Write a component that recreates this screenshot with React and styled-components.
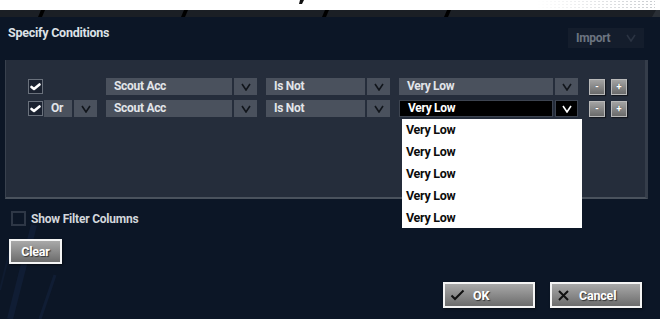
import React from "react";
import styled, { createGlobalStyle } from "styled-components";

const Global = createGlobalStyle`
  html, body { margin: 0; padding: 0; background: #0c1626; }
  body { width: 660px; height: 319px; overflow: hidden; font-family: Roboto, "Liberation Sans", sans-serif; }
  * { box-sizing: border-box; }
`;

const Page = styled.div`
  position: relative;
  width: 660px;
  height: 319px;
  background: #0c1626;
  display: flex;
  flex-direction: column;
  overflow: hidden;
`;

const BgDecor = styled.svg`
  position: absolute;
  left: 0;
  top: 0;
  pointer-events: none;
`;

const TopBand = styled.div`
  position: relative;
  height: 10px;
  background: #ffffff;
  display: flex;
  justify-content: flex-end;
  z-index: 1;
`;

const Dots = styled.div`
  width: 118px;
  height: 9px;
  margin-right: 5px;
  background-image: radial-gradient(circle, #c9ccd0 0.8px, transparent 1.1px);
  background-size: 4px 3px;
  -webkit-mask-image: linear-gradient(90deg, transparent, #000);
  mask-image: linear-gradient(90deg, transparent, #000);
`;

const TitleMark = styled.svg`
  position: absolute;
  left: 298px;
  top: 0;
`;

const Stripe = styled.svg`
  display: block;
  position: relative;
  z-index: 1;
`;

const Body = styled.div`
  position: relative;
  z-index: 1;
  flex: 1;
  display: flex;
  flex-direction: column;
`;

const HeaderRow = styled.div`
  display: flex;
  justify-content: space-between;
  align-items: flex-start;
  padding: 8px 16px 0 8px;
  height: 43px;
`;

const Title = styled.div`
  font-weight: 700;
  font-size: 12.5px;
  letter-spacing: -0.25px;
  color: #dde1e6;
  line-height: 16px;
`;

const ImportButton = styled.div`
  margin-top: 3px;
  width: 76px;
  height: 20px;
  background: #141d2c;
  display: flex;
  align-items: center;
  justify-content: space-between;
  padding: 0 8px 0 8px;
  font-weight: 700;
  font-size: 12px;
  letter-spacing: -0.3px;
  color: #6c7480;
`;

const Panel = styled.div`
  position: relative;
  z-index: 2;
  margin-left: 5px;
  width: 643px;
  height: 139px;
  background: #252d3b;
  border-left: 1px solid #39414e;
  border-right: 3px solid #353d4a;
  border-bottom: 2px solid #4a525d;
  padding: 18px 0 0 22px;
  display: flex;
  flex-direction: column;
  gap: 5px;
`;

const Row = styled.div`
  display: flex;
  align-items: center;
  height: 17px;
  gap: 9px;
`;

const Group = styled.div`
  position: relative;
  display: flex;
  align-items: center;
  gap: ${(p) => p.$gap ?? 2}px;
  width: ${(p) => p.$w}px;
  height: 17px;
  margin-left: ${(p) => p.$ml ?? 0}px;
`;

const Check = styled.div`
  width: 15px;
  height: 15px;
  flex: none;
  background: #1b2230;
  border: 1px solid #6a717c;
  display: flex;
  align-items: center;
  justify-content: center;
  margin-right: ${(p) => p.$mr ?? 0}px;
`;

const Field = styled.div`
  width: ${(p) => p.$w}px;
  height: 17px;
  flex: none;
  background: ${(p) => (p.$active ? "#000" : "#4a515d")};
  border: ${(p) => (p.$active ? "1px solid #3d4450" : "none")};
  color: ${(p) => (p.$active ? "#fff" : "#e2e5e9")};
  font-weight: 700;
  font-size: 12px;
  letter-spacing: -0.3px;
  line-height: 15px;
  padding-left: ${(p) => p.$pl ?? 8}px;
  display: flex;
  align-items: center;
`;

const ChevBox = styled.div`
  width: 23px;
  height: 17px;
  flex: none;
  background: ${(p) => (p.$active ? "#000" : "#4a515d")};
  border: ${(p) => (p.$active ? "1px solid #3d4450" : "none")};
  display: flex;
  align-items: center;
  justify-content: center;
`;

const SmallBtn = styled.div`
  width: 16px;
  height: 16px;
  flex: none;
  background: linear-gradient(#a3a3a3, #6a6a6a);
  border: 1px solid #b9b9b9;
  box-shadow: 1px 1px 1px rgba(0,0,0,0.45);
  color: #fff;
  font-size: 10px;
  font-weight: 700;
  line-height: 12px;
  display: flex;
  align-items: center;
  justify-content: center;
  text-shadow: 0 0 1px #333;
`;

const DropList = styled.div`
  position: absolute;
  left: 3px;
  top: 19px;
  width: 180px;
  height: 109px;
  background: #ffffff;
  display: flex;
  flex-direction: column;
  z-index: 5;
`;

const DropItem = styled.div`
  height: 22px;
  display: flex;
  align-items: center;
  padding-left: 4px;
  font-weight: 700;
  font-size: 12.5px;
  letter-spacing: -0.3px;
  color: #0c0c0c;
`;

const OptionRow = styled.div`
  display: flex;
  align-items: center;
  gap: 5px;
  margin: 12px 0 0 11px;
  font-weight: 700;
  font-size: 12px;
  letter-spacing: -0.2px;
  color: #d3d7dc;
`;

const EmptyBox = styled.div`
  width: 15px;
  height: 15px;
  border: 2px solid #2e3746;
`;

const GrayButton = styled.div`
  width: ${(p) => p.$w}px;
  height: ${(p) => p.$h}px;
  border: 2px solid #f4f4f4;
  background: linear-gradient(#a9a9a9, #6c6c6c);
  box-shadow: 1px 1px 2px rgba(0,0,0,0.5);
  display: flex;
  align-items: center;
  justify-content: ${(p) => p.$justify ?? "center"};
  gap: ${(p) => p.$gap ?? 0}px;
  padding-left: ${(p) => p.$pl ?? 0}px;
  font-weight: 700;
  font-size: 12.5px;
  letter-spacing: -0.2px;
  color: #ffffff;
  text-shadow: 1px 1px 1px #333;
`;

const ClearWrap = styled.div`
  margin: 13px 0 0 9px;
`;

const Footer = styled.div`
  display: flex;
  justify-content: flex-end;
  gap: 15px;
  margin: 18px 18px 0 0;
`;

const Chevron = ({ color = "#11151b" }) => (
  <svg width="10" height="8" viewBox="0 0 10 8">
    <polyline points="1,1 5,7 9,1" fill="none" stroke={color} strokeWidth="1.6" />
  </svg>
);

const Tick = () => (
  <svg width="11" height="9" viewBox="0 0 11 9">
    <path d="M1.5 5 L4 7 L9.5 2.5" fill="none" stroke="#fff" strokeWidth="2.6" strokeLinecap="round" strokeLinejoin="round" />
  </svg>
);

export default function App() {
  return (
    <>
      <Global />
      <Page>
        <BgDecor width="660" height="319" viewBox="0 0 660 319">
          <line x1="34" y1="225" x2="10" y2="319" stroke="#13203a" strokeWidth="6" opacity="0.7" />
          <line x1="55" y1="275" x2="40" y2="319" stroke="#13203a" strokeWidth="3" opacity="0.7" />
          <line x1="10" y1="250" x2="0" y2="290" stroke="#13203a" strokeWidth="2" opacity="0.5" />
        </BgDecor>
        <TopBand>
          <Dots />
          <TitleMark width="8" height="4" viewBox="0 0 8 4">
            <path d="M2 0 L6 0 L4 4 L1 4 Z" fill="#111" />
          </TitleMark>
        </TopBand>
        <Stripe width="660" height="7" viewBox="0 0 660 7">
          <rect x="0" y="0" width="660" height="7" fill="#1b1f25" />
          <polygon points="38,7 41,0 45,0 42,7" fill="#000" />
          <polygon points="181,7 184,0 188,0 185,7" fill="#000" />
          <polygon points="322,7 325,0 329,0 326,7" fill="#000" />
          <polygon points="444,7 447,0 451,0 448,7" fill="#000" />
          <polygon points="652,7 656,0 660,0 660,7" fill="#2a2f36" />
        </Stripe>
        <Body>
          <HeaderRow>
            <Title>Specify Conditions</Title>
            <ImportButton>
              <span>Import</span>
              <Chevron color="#2a3342" />
            </ImportButton>
          </HeaderRow>
          <Panel>
            <Row>
              <Group $w={69}>
                <Check><Tick /></Check>
              </Group>
              <Group $w={151}>
                <Field $w={126}>Scout Acc</Field>
                <ChevBox><Chevron /></ChevBox>
              </Group>
              <Group $w={124}>
                <Field $w={99}>Is Not</Field>
                <ChevBox><Chevron /></ChevBox>
              </Group>
              <Group $w={179}>
                <Field $w={154}>Very Low</Field>
                <ChevBox><Chevron /></ChevBox>
              </Group>
              <Group $w={39} $gap={6} $ml={2}>
                <SmallBtn>-</SmallBtn>
                <SmallBtn>+</SmallBtn>
              </Group>
            </Row>
            <Row>
              <Group $w={69}>
                <Check $mr={-1}><Tick /></Check>
                <Field $w={28} $pl={7}>Or</Field>
                <ChevBox><Chevron /></ChevBox>
              </Group>
              <Group $w={151}>
                <Field $w={126}>Scout Acc</Field>
                <ChevBox><Chevron /></ChevBox>
              </Group>
              <Group $w={124}>
                <Field $w={99}>Is Not</Field>
                <ChevBox><Chevron /></ChevBox>
              </Group>
              <Group $w={179}>
                <Field $w={154} $active>Very Low</Field>
                <ChevBox $active><Chevron color="#fff" /></ChevBox>
                <DropList>
                  {["Very Low", "Very Low", "Very Low", "Very Low", "Very Low"].map((t, i) => (
                    <DropItem key={i}>{t}</DropItem>
                  ))}
                </DropList>
              </Group>
              <Group $w={39} $gap={6} $ml={2}>
                <SmallBtn>-</SmallBtn>
                <SmallBtn>+</SmallBtn>
              </Group>
            </Row>
          </Panel>
          <OptionRow>
            <EmptyBox />
            <span>Show Filter Columns</span>
          </OptionRow>
          <ClearWrap>
            <GrayButton $w={53} $h={25}>Clear</GrayButton>
          </ClearWrap>
          <Footer>
            <GrayButton $w={92} $h={26} $justify="flex-start" $pl={5} $gap={8}>
              <svg width="15" height="12" viewBox="0 0 15 12">
                <path d="M1.5 6.5 L5 10 L13.5 1.5" fill="none" stroke="#111" strokeWidth="2" />
              </svg>
              <span>OK</span>
            </GrayButton>
            <GrayButton $w={92} $h={26} $justify="flex-start" $pl={6} $gap={10}>
              <svg width="11" height="11" viewBox="0 0 11 11">
                <path d="M1 1 L10 10 M10 1 L1 10" fill="none" stroke="#111" strokeWidth="2" />
              </svg>
              <span>Cancel</span>
            </GrayButton>
          </Footer>
        </Body>
      </Page>
    </>
  );
}
